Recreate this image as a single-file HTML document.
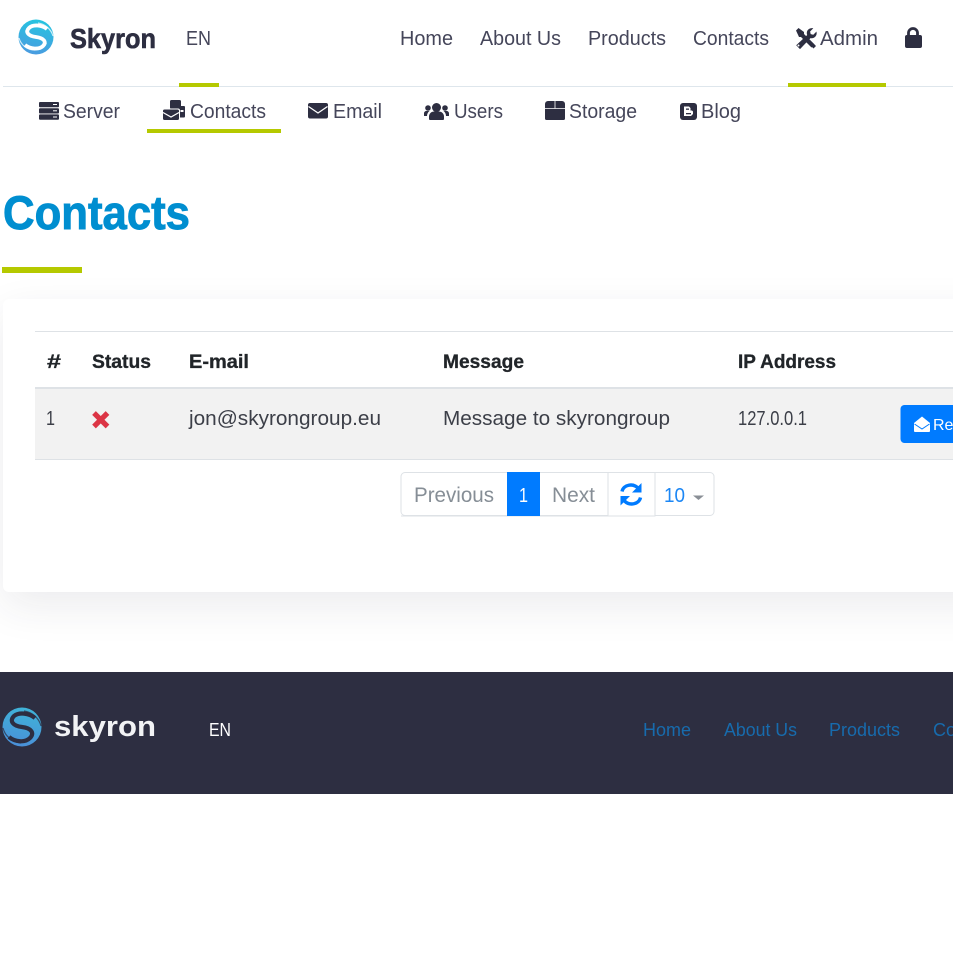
<!DOCTYPE html>
<html lang="en"><head><meta charset="utf-8"><title>Contacts - Skyron</title>
<style>
html,body{margin:0;padding:0;background:#fff;width:953px;height:953px;overflow:hidden}
.b{position:absolute}
svg{position:absolute;left:0;top:0}
text{font-family:"Liberation Sans",sans-serif}
.n{font-size:20px;fill:#45465a}
.h{font-size:19px;font-weight:bold;fill:#212529;stroke:#212529;stroke-width:.3px}
.r{font-size:20px;fill:#3c3f48}
.f{font-size:18px;fill:#176bad}
.d{fill:#2d2e41}
</style></head><body>
<div class="b" style="left:3px;top:299px;width:1000px;height:293px;background:#fff;border-radius:6px;box-shadow:0 14px 42px rgba(45,46,65,.09)"></div>
<div class="b" style="left:0;top:672px;width:953px;height:122px;background:#2d2e41"></div>
<svg width="953" height="953" viewBox="0 0 953 953" xmlns="http://www.w3.org/2000/svg">
<defs>
<linearGradient id="g" x1="0.6" y1="0" x2="0.4" y2="1"><stop offset="0" stop-color="#25c5e0"/><stop offset="1" stop-color="#4a9be0"/></linearGradient>
<linearGradient id="g2" x1="0.6" y1="0" x2="0.4" y2="1"><stop offset="0" stop-color="#3fb4d8"/><stop offset="1" stop-color="#4a8fd8"/></linearGradient>
</defs>
<!-- top nav -->
<rect x="3" y="86" width="950" height="1" fill="#dee6ec"/>
<rect x="179" y="83" width="40" height="4" fill="#b5c900"/>
<rect x="788" y="83" width="98" height="4" fill="#b5c900"/>
<rect x="147" y="129" width="134" height="4" fill="#b5c900"/>
<!-- logo -->
<circle cx="36" cy="37" r="17.5" fill="url(#g)"/>
<path d="M47 29C42 25 33 24 29 28C25 32 28 36 36 37C44 38 47 42 43 46C39 50 30 49 25 45" fill="none" stroke="#fff" stroke-width="3.800"/>
<path d="M19 38C21 45 27 50 35 50M53 36C51 29 45 24 38 23" fill="none" stroke="#fff" stroke-width="1.200" opacity=".75"/>
<text x="70" y="48" font-size="28" font-weight="bold" class="d" stroke="#2d2e41" stroke-width=".6" textLength="86" lengthAdjust="spacingAndGlyphs">Skyron</text>
<text x="186" y="45" class="n" textLength="25" lengthAdjust="spacingAndGlyphs">EN</text>
<text x="400" y="45" class="n" textLength="53" lengthAdjust="spacingAndGlyphs">Home</text>
<text x="480" y="45" class="n" textLength="81" lengthAdjust="spacingAndGlyphs">About Us</text>
<text x="588" y="45" class="n" textLength="78" lengthAdjust="spacingAndGlyphs">Products</text>
<text x="693" y="45" class="n" textLength="76" lengthAdjust="spacingAndGlyphs">Contacts</text>
<text x="820" y="45" class="n" textLength="58" lengthAdjust="spacingAndGlyphs">Admin</text>
<!-- tools -->
<path d="M796 30.500l2.500-2.500 5.500 4v2l10.500 10.500-3 3-10.500-10.500h-2z" class="d"/>
<path d="M808 38l8 8-2.500 2.500-8-8z" class="d"/>
<path d="M816.500 31.500l-3.200 3.200-2.600-.6-.6-2.600 3.200-3.200c-3-.9-6.500 1.200-6.500 4.700 0 .8.100 1.300.4 2l-11 10.300 3.800 3.800 10.500-11c3.500 1 7-2.500 6-6.100z" class="d"/>
<circle cx="798.500" cy="45.500" r="1" fill="#fff"/>
<!-- lock -->
<path d="M908.500 36v-3a4.500 4.500 0 0 1 9 0v3" fill="none" stroke="#2d2e41" stroke-width="2.800"/>
<rect x="905" y="35" width="17" height="13" rx="2" class="d"/>
<!-- subnav -->
<g class="d">
<rect x="39" y="102" width="20" height="5.300" rx="1"/><rect x="39" y="108.200" width="20" height="5.300" rx="1"/><rect x="39" y="114.400" width="20" height="5.300" rx="1"/>
</g>
<g fill="#fff"><rect x="53" y="104" width="4" height="1"/><rect x="53" y="110.300" width="4" height="1"/><rect x="53" y="116.500" width="4" height="1"/></g>
<text x="63" y="118" class="n" textLength="57" lengthAdjust="spacingAndGlyphs">Server</text>
<!-- mail bulk -->
<g class="d"><rect x="170" y="100" width="11" height="9" rx="1.500"/><rect x="173" y="106" width="12" height="11.500" rx="1"/></g>
<rect x="162.500" y="108.500" width="17.500" height="12" rx="2" fill="#fff"/>
<rect x="163" y="109.500" width="16" height="10.500" rx="1.500" class="d"/>
<path d="M163 112.500l8 4.500 8-4.500" fill="none" stroke="#fff" stroke-width="1.200"/>
<rect x="180.500" y="110" width="3" height="2" fill="#fff"/>
<text x="190" y="118" class="n" textLength="76" lengthAdjust="spacingAndGlyphs">Contacts</text>
<!-- envelope -->
<rect x="308" y="103" width="20" height="15.500" rx="2" class="d"/>
<path d="M308.500 106.500l9.500 6.500 9.500-6.500" fill="none" stroke="#fff" stroke-width="1.300"/>
<text x="333" y="118" class="n" textLength="49" lengthAdjust="spacingAndGlyphs">Email</text>
<!-- users -->
<g class="d">
<circle cx="436.500" cy="107.500" r="4.500"/><path d="M429 119v-2.500c0-3 2.500-5 5-5h5c2.500 0 5 2 5 5v2.500a1 1 0 0 1-1 1h-13a1 1 0 0 1-1-1z"/>
<circle cx="428" cy="108" r="2.800"/><circle cx="445" cy="108" r="2.800"/>
<path d="M424 116v-2.500c0-1.500 1-2.500 2.500-2.500h3c-1.500 1-2.500 3-2.500 5z"/><path d="M449 116v-2.500c0-1.500-1-2.500-2.500-2.500h-3c1.500 1 2.500 3 2.500 5z"/>
</g>
<text x="454" y="118" class="n" textLength="49" lengthAdjust="spacingAndGlyphs">Users</text>
<!-- box -->
<path d="M545 104a3 3 0 0 1 3-3h14a3 3 0 0 1 3 3v14.500a1.500 1.500 0 0 1-1.500 1.500h-17a1.500 1.500 0 0 1-1.500-1.500z" class="d"/>
<path d="M555 101v7.500M545 108.500h20" stroke="#fff" stroke-width=".8" fill="none"/>
<text x="569" y="118" class="n" textLength="68" lengthAdjust="spacingAndGlyphs">Storage</text>
<!-- blogger -->
<rect x="680" y="103" width="17" height="17" rx="3" class="d"/>
<path d="M684 106.500h5l1.500 1.500v2.500h1.500l1 1v2.500l-2 2h-7z" fill="#fff"/>
<rect x="686" y="108.500" width="3" height="1.300" class="d"/><rect x="686" y="113" width="5" height="1.300" class="d"/>
<text x="701" y="118" class="n" textLength="40" lengthAdjust="spacingAndGlyphs">Blog</text>
<!-- heading -->
<text x="3" y="229" font-size="47" font-weight="bold" fill="#008ed0" stroke="#008ed0" stroke-width=".9" textLength="187" lengthAdjust="spacingAndGlyphs">Contacts</text>
<rect x="2" y="267" width="80" height="6" fill="#b5c900"/>
<!-- table -->
<rect x="35" y="331" width="918" height="1" fill="#dee2e6"/>
<rect x="35" y="389" width="918" height="70" fill="#f2f2f2"/>
<rect x="35" y="387" width="918" height="2" fill="#dee2e6"/>
<rect x="35" y="459" width="918" height="1" fill="#dee2e6"/>
<text x="47" y="368" class="h" textLength="14" lengthAdjust="spacingAndGlyphs">#</text>
<text x="92" y="368" class="h" textLength="59" lengthAdjust="spacingAndGlyphs">Status</text>
<text x="189" y="368" class="h" textLength="60" lengthAdjust="spacingAndGlyphs">E-mail</text>
<text x="443" y="368" class="h" textLength="81" lengthAdjust="spacingAndGlyphs">Message</text>
<text x="738" y="368" class="h" textLength="98" lengthAdjust="spacingAndGlyphs">IP Address</text>
<text x="46" y="425" class="r" textLength="9" lengthAdjust="spacingAndGlyphs">1</text>
<path d="M94 413l13.500 13.500M107.500 413l-13.500 13.500" stroke="#dc3545" stroke-width="5.200" fill="none"/>
<text x="189" y="425" class="r" textLength="192" lengthAdjust="spacingAndGlyphs">jon@skyrongroup.eu</text>
<text x="443" y="425" class="r" textLength="227" lengthAdjust="spacingAndGlyphs">Message to skyrongroup</text>
<text x="738" y="425" class="r" textLength="69" lengthAdjust="spacingAndGlyphs">127.0.0.1</text>
<rect x="900.500" y="405" width="80" height="38" rx="4" fill="#007bff"/>
<path d="M914 423l8-6.500 8 6.500v8a1 1 0 0 1-1 1h-14a1 1 0 0 1-1-1z" fill="#fff"/>
<path d="M914.500 424l7.500 5 7.500-5" fill="none" stroke="#007bff" stroke-width="1"/>
<text x="933" y="430" font-size="16" fill="#fff">Read</text>
<!-- pagination -->
<rect x="401" y="472.500" width="313" height="43" rx="4" fill="#fff" stroke="#dee2e6"/>
<rect x="608" y="472.500" width="47" height="43.500" fill="#fff" stroke="#dee2e6"/>
<path d="M539.500 472v44M401 516h254" stroke="#dee2e6" fill="none"/>
<rect x="507" y="472" width="33" height="44" fill="#007bff"/>
<text x="414" y="502" font-size="21" fill="#868e96" textLength="80" lengthAdjust="spacingAndGlyphs">Previous</text>
<text x="519" y="502" font-size="20" fill="#fff" textLength="9" lengthAdjust="spacingAndGlyphs">1</text>
<text x="552" y="502" font-size="21" fill="#868e96" textLength="43" lengthAdjust="spacingAndGlyphs">Next</text>
<path d="M622 491.500c1.500-7 11-8.500 16-3.500M640.500 497.500c-1.500 7-11 8.500-16 3.500" fill="none" stroke="#007bff" stroke-width="3.400"/>
<path d="M641.500 483v9.500h-9.500zM620.500 505.500v-9.500h9.500z" fill="#007bff"/>
<text x="664" y="502" font-size="20" fill="#1c87f5" textLength="21" lengthAdjust="spacingAndGlyphs">10</text>
<path d="M693 495.500h11l-5.500 4.500z" fill="#8a8f96"/>
<!-- footer -->
<circle cx="22" cy="727" r="19.500" fill="url(#g2)"/>
<path d="M35 718C29 713 19 712 14 716C9 721 13 726 22 727C31 728 35 733 30 738C25 743 15 742 9 737" fill="none" stroke="#2d2e41" stroke-width="4.200"/>
<path d="M3 728C5 736 12 742 21 743M41 726C39 718 32 712 24 711" fill="none" stroke="#2d2e41" stroke-width="1.200" opacity=".75"/>
<text x="54" y="736" font-size="29" font-weight="bold" fill="#f2f3f5" textLength="102" lengthAdjust="spacingAndGlyphs">skyron</text>
<text x="209" y="736" font-size="18" fill="#fff" textLength="22" lengthAdjust="spacingAndGlyphs">EN</text>
<text x="643" y="736" class="f" textLength="48" lengthAdjust="spacingAndGlyphs">Home</text>
<text x="724" y="736" class="f" textLength="73" lengthAdjust="spacingAndGlyphs">About Us</text>
<text x="829" y="736" class="f" textLength="71" lengthAdjust="spacingAndGlyphs">Products</text>
<text x="933" y="736" class="f">Contacts</text>
</svg>
</body></html>
